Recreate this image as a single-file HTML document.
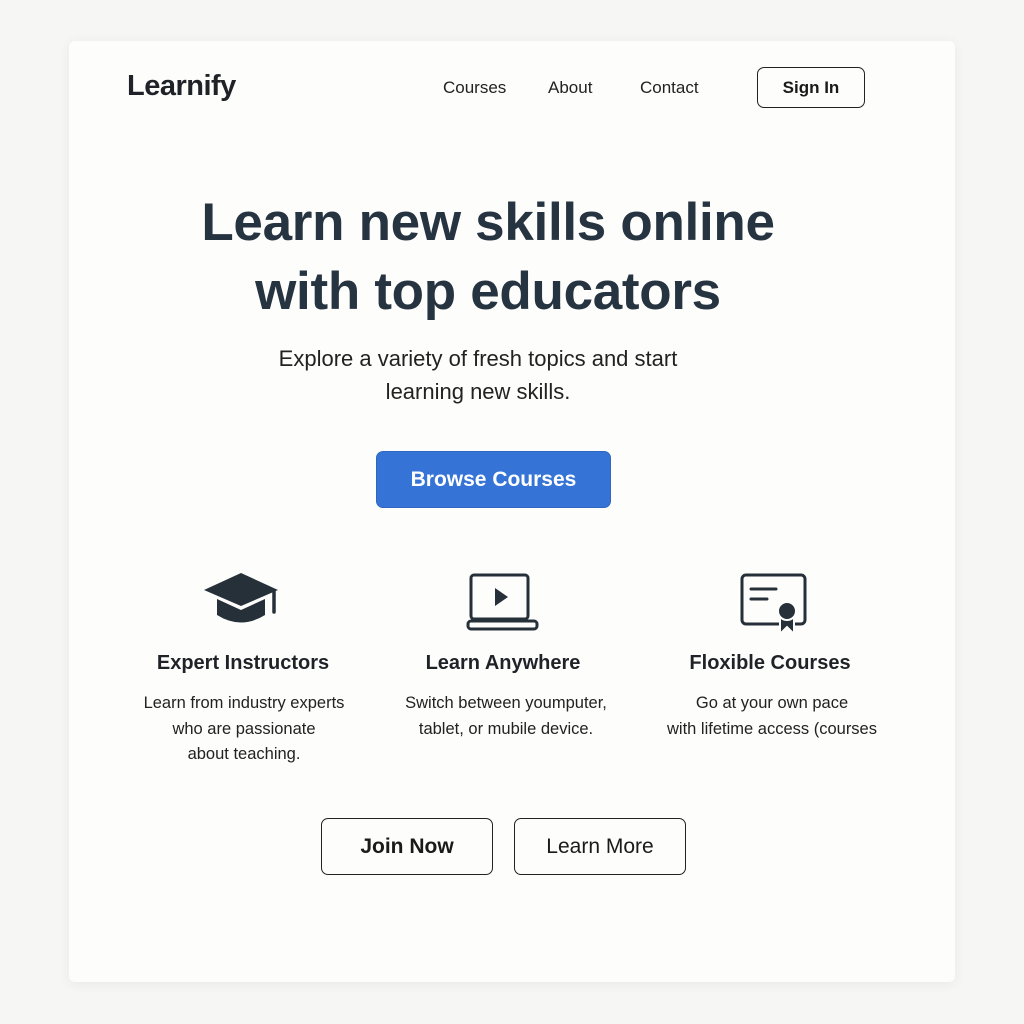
<!DOCTYPE html>
<html><head><meta charset="utf-8"><style>
*{margin:0;padding:0;box-sizing:border-box}
body{width:1024px;height:1024px;background:#f6f6f5;font-family:"Liberation Sans",sans-serif;color:#1f2328;position:relative;overflow:hidden}
.card{position:absolute;left:69px;top:41px;width:886px;height:941px;background:#fdfdfc;border-radius:6px;box-shadow:0 2px 12px rgba(0,0,0,.06)}
.a{position:absolute;white-space:nowrap}
.c{text-align:center;transform:translateX(-50%)}
.nav{font-size:17px;top:78px;color:#222}
.btn{position:absolute;border:1.5px solid #222;border-radius:7px;display:flex;align-items:center;justify-content:center;font-weight:bold;color:#1a1a1a}
h1{position:absolute;left:488px;transform:translateX(-50%);top:188px;width:800px;white-space:nowrap;text-align:center;font-size:53px;line-height:69px;color:#263340;font-weight:bold;letter-spacing:-0.3px}
.sub{font-size:22px;line-height:33px;top:342px;left:478px;color:#222}
.ft{font-size:20px;font-weight:bold;top:652px;color:#1f2328}
.fd{font-size:16.5px;line-height:25.5px;top:691px;color:#222}
</style></head><body>
<div class="card"></div>
<div class="a" style="left:127px;top:70px;font-size:29px;font-weight:bold;color:#1f2328;letter-spacing:-0.5px">Learnify</div>
<div class="a nav" style="left:443px">Courses</div>
<div class="a nav" style="left:548px">About</div>
<div class="a nav" style="left:640px">Contact</div>
<div class="btn" style="left:757px;top:67px;width:108px;height:41px;font-size:17px">Sign In</div>
<h1>Learn new skills online<br>with top educators</h1>
<div class="a c sub">Explore a variety of fresh topics and start<br>learning new skills.</div>
<div class="btn" style="left:376px;top:451px;width:235px;height:57px;background:#3574d6;border-color:#2f66c0;color:#fff;font-size:21px">Browse Courses</div>
<svg class="a" style="left:200px;top:570px" width="82" height="60" viewBox="0 0 82 60"><path d="M41 3 L78 20 L41 36 L4 20Z" fill="#263038"/><path d="M17 29 V45 Q41 60 65 45 V29 L41 40Z" fill="#263038"/><path d="M74 21 V42" stroke="#263038" stroke-width="3.5" stroke-linecap="round"/></svg>
<svg class="a" style="left:465px;top:572px" width="75" height="60" viewBox="0 0 75 60"><rect x="6" y="3" width="57" height="44" rx="3" fill="none" stroke="#263038" stroke-width="3"/><path d="M30 16 L43 25 L30 34Z" fill="#263038"/><rect x="3" y="49" width="69" height="8" rx="3" fill="none" stroke="#263038" stroke-width="3"/></svg>
<svg class="a" style="left:738px;top:572px" width="72" height="66" viewBox="0 0 72 66"><rect x="4" y="3" width="63" height="49" rx="4" fill="none" stroke="#263038" stroke-width="3"/><path d="M13 17H38M13 27H29" stroke="#263038" stroke-width="3" stroke-linecap="round"/><path d="M42 44 V62 L49 55 L56 62 V44" fill="#263038" stroke="#fdfdfc" stroke-width="2"/><circle cx="49" cy="39" r="9" fill="#263038" stroke="#fdfdfc" stroke-width="2"/></svg>
<div class="a c ft" style="left:243px">Expert Instructors</div>
<div class="a c ft" style="left:503px">Learn Anywhere</div>
<div class="a c ft" style="left:770px">Floxible Courses</div>
<div class="a c fd" style="left:244px">Learn from industry experts<br>who are passionate<br>about teaching.</div>
<div class="a c fd" style="left:506px">Switch between youmputer,<br>tablet, or mubile device.</div>
<div class="a c fd" style="left:772px">Go at your own pace<br>with lifetime access (courses</div>
<div class="btn" style="left:321px;top:818px;width:172px;height:57px;font-size:21px">Join Now</div>
<div class="btn" style="left:514px;top:818px;width:172px;height:57px;font-size:21px;font-weight:normal">Learn More</div>
</body></html>
